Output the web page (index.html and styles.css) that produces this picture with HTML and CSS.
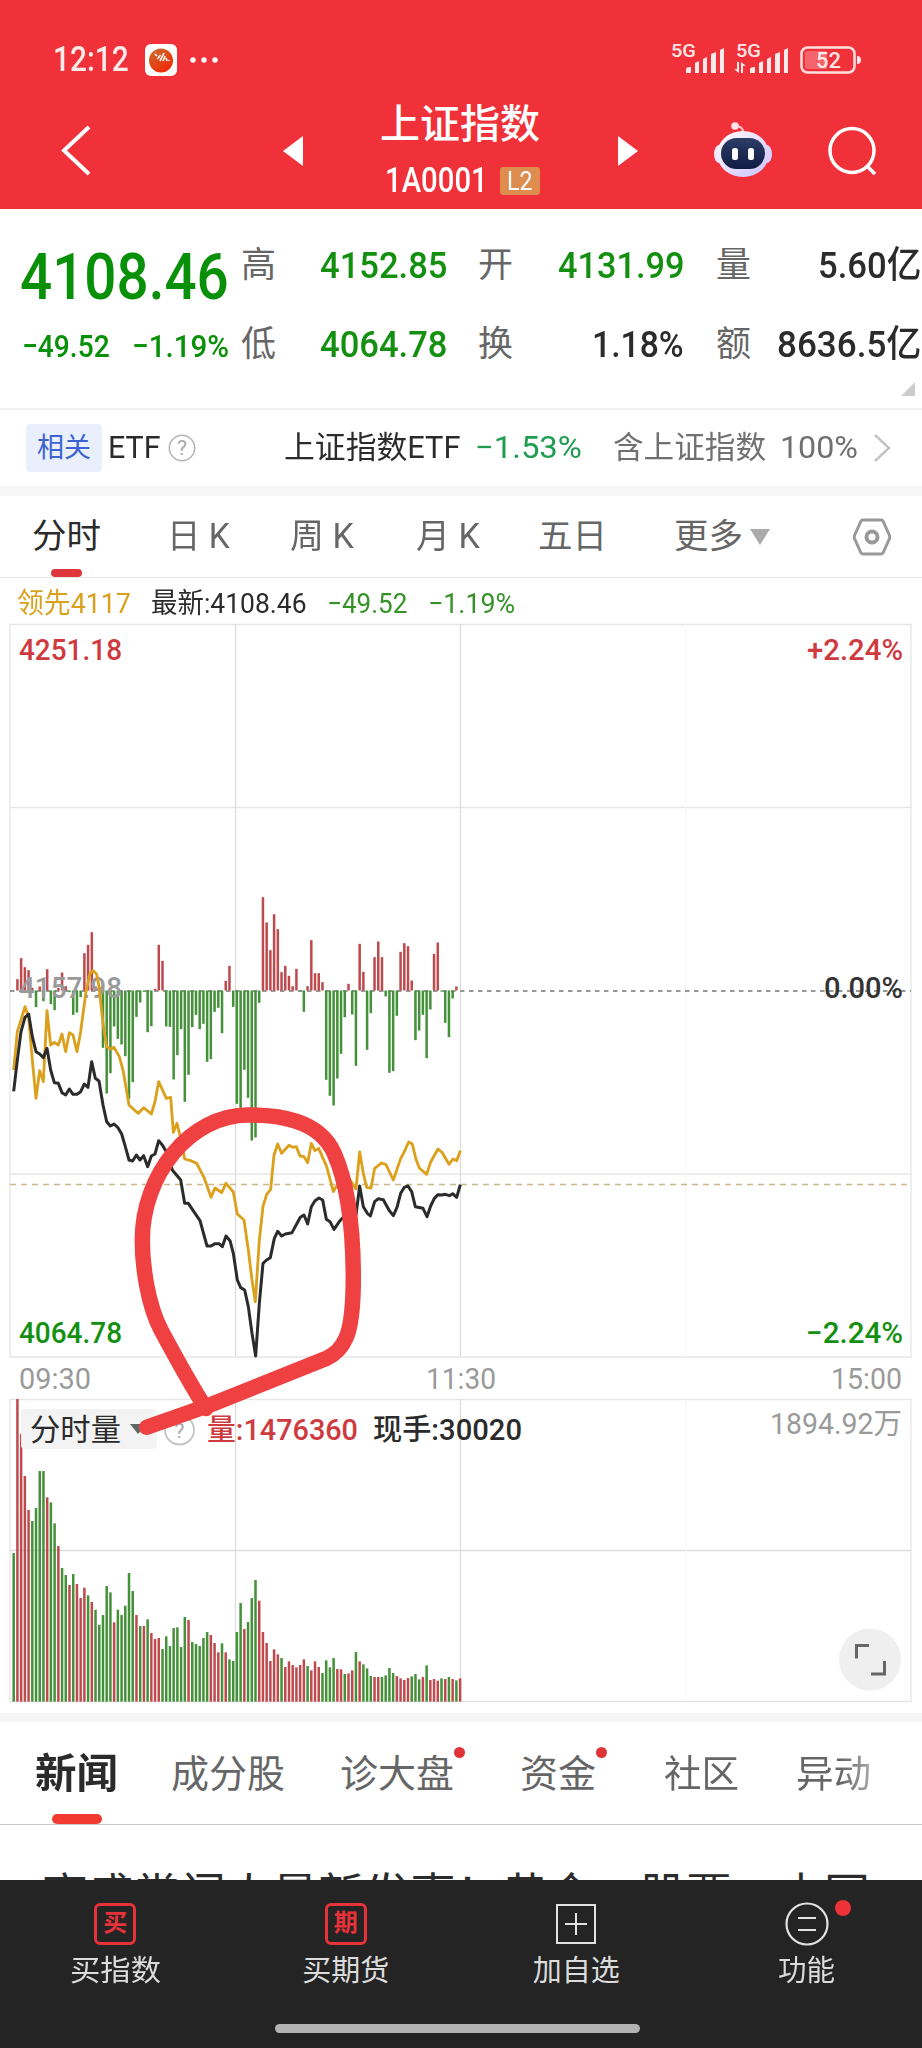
FILE: index.html
```html
<!DOCTYPE html>
<html lang="zh-CN">
<head>
<meta charset="utf-8">
<title>上证指数</title>
<link rel="stylesheet" href="styles.css">
</head>
<body>
<header class="top">
  <div class="status">
    <span class="clock" data-w="76">12:12</span>
    <svg class="app" viewBox="0 0 32 32" width="32" height="32">
      <defs><linearGradient id="ball" x1="0" y1="0" x2="0.6" y2="1"><stop offset="0" stop-color="#c8722c"/><stop offset="1" stop-color="#f02a08"/></linearGradient></defs>
      <rect width="32" height="32" rx="6" fill="#fff"/><circle cx="16" cy="16.500" r="12" fill="url(#ball)"/>
      <path d="M10 10l2 2M12.500 15l3-4M15 17l4-8M18 17l2-5M21 14l1 3M24 16v1" fill="none" stroke="#fff" stroke-width="1.600"/>
    </svg>
    <svg class="dots" viewBox="0 0 30 8" width="30" height="8" fill="#fff"><circle cx="4" cy="4" r="2.700"/><circle cx="15" cy="4" r="2.700"/><circle cx="26" cy="4" r="2.700"/></svg>
    <svg class="signals" viewBox="0 0 200 34" width="200" height="34" fill="#fff" fill-opacity=".9">
      <text x="2" y="15" class="net" textLength="25">5G</text>
      <path d="M17 31v-4q0-2 5-2v6zM26 31V21l4-2v12zM34 31V17l4-2v16zM42 31V12l5-2v21zM51 31V8l4-2v25z"/>
      <text x="67" y="15" class="net" textLength="25">5G</text>
      <path d="M70 20v11l-5-4h3v-7zM72 31V20l5 4h-3v7zM81 31v-4q0-2 5-2v6zM90 31V21l4-2v12zM98 31V17l4-2v16zM106 31V12l5-2v21zM115 31V8l4-2v25z"/>
      <rect x="132.500" y="5.500" width="53" height="25" rx="6" fill="none" stroke="#ffe0e0" stroke-width="2.500"/>
      <path d="M138 9h20v18h-20q-2 0-2-2V11q0-2 2-2z" fill-opacity=".25"/>
      <path d="M188 14q4 0 4 4t-4 4z"/>
      <text x="147" y="26" class="batt" textLength="25" lengthAdjust="spacingAndGlyphs">52</text>
    </svg>
  </div>
  <div class="titlebar">
    <svg viewBox="0 0 34 60" width="34" height="60"><path d="M29 6L4 29.500L29 53" fill="none" stroke="#fff" stroke-width="4"/></svg>
    <svg viewBox="0 0 24 32" width="24" height="32"><path d="M1 16L21 1V31z" fill="#fff"/></svg>
    <div class="name">
      <h1 data-w="160">上证指数</h1>
      <div class="code"><span data-w="103">1A0001</span><b class="l2"><span data-w="26">L2</span></b></div>
    </div>
    <svg viewBox="0 0 24 32" width="24" height="32"><path d="M21 16L1 1V31z" fill="#fff"/></svg>
    <svg viewBox="0 0 60 60" width="60" height="60">
      <defs>
        <linearGradient id="shell" x1="0" y1="0" x2="1" y2="1"><stop offset="0" stop-color="#fff"/><stop offset=".55" stop-color="#e6dcff"/><stop offset="1" stop-color="#c9c2fa"/></linearGradient>
        <linearGradient id="visor" x1="0" y1="0" x2="0" y2="1"><stop offset="0" stop-color="#2d3d66"/><stop offset="1" stop-color="#101c42"/></linearGradient>
      </defs>
      <path d="M22 5Q30 5 30 11" fill="none" stroke="#ffc9d6" stroke-width="2"/><circle cx="22" cy="5" r="3.800" fill="#ffe3ea"/>
      <ellipse cx="6" cy="33" rx="5" ry="9" fill="#f4e9ff"/><ellipse cx="54" cy="33" rx="5" ry="9" fill="#d9d3ff"/>
      <ellipse cx="30" cy="33" rx="26" ry="23" fill="url(#shell)"/>
      <rect x="8" y="17" width="44" height="31" rx="15.500" fill="url(#visor)"/>
      <rect x="19" y="27" width="6" height="12" rx="2.500" fill="#fff"/><rect x="35" y="27" width="6" height="12" rx="2.500" fill="#fff"/>
    </svg>
    <svg viewBox="0 0 54 54" width="54" height="54" fill="none" stroke="#fff" stroke-width="3.500"><circle cx="26" cy="26.500" r="22"/><path d="M41 42L49 50"/></svg>
  </div>
</header>

<section class="stats">
  <div class="now">
    <div class="price" data-w="209">4108.46</div>
    <div class="chg"><span data-w="88">−49.52</span><span data-w="97">−1.19%</span></div>
  </div>
  <div class="cells">
    <i>高</i><b class="down" data-w="127">4152.85</b><i>开</i><b class="down" data-w="126">4131.99</b><i>量</i><b data-w="103">5.60亿</b>
    <i>低</i><b class="down" data-w="127">4064.78</b><i>换</i><b data-w="92">1.18%</b><i>额</i><b data-w="144">8636.5亿</b>
  </div>
  <svg class="corner" viewBox="0 0 14 14" width="14" height="14"><path d="M14 0V14H0z" fill="#ccc"/></svg>
</section>

<section class="etf">
  <span class="tag">相关</span>
  <span data-w="53">ETF</span>
  <svg viewBox="0 0 30 30" width="30" height="30"><circle cx="16" cy="15" r="12.700" fill="none" stroke="#b5b5b5" stroke-width="1.500"/><text x="16" y="22" class="q">?</text></svg>
  <span class="fund" data-w="177">上证指数ETF</span>
  <span class="rate" data-w="107">−1.53%</span>
  <span class="muted" data-w="153">含上证指数</span>
  <span class="muted" data-w="78">100%</span>
  <svg viewBox="0 0 20 30" width="20" height="30"><path d="M3 2L17 15L3 28" fill="none" stroke="#c4c4c4" stroke-width="2.500"/></svg>
</section>

<nav class="periods">
  <span class="on">分时</span><span data-w="63">日 K</span><span data-w="64">周 K</span><span data-w="64">月 K</span><span>五日</span><span>更多</span>
  <svg viewBox="0 0 20 16" width="20" height="16"><path d="M0 0H20L10 16z" fill="#aaa"/></svg>
  <svg class="gear" viewBox="0 0 42 40" width="42" height="40" fill="none" stroke="#999" stroke-width="3"><path d="M12 3H30Q31 3 32 4L38.500 18.500Q39 20 38.500 21.500L32 36Q31 37 30 37H12Q11 37 10 36L3.500 21.500Q3 20 3.500 18.500L10 4Q11 3 12 3z"/><circle cx="21" cy="20" r="5.500" stroke-width="4"/></svg>
</nav>

<div class="legend">
  <span class="lead" data-w="114">领先4117</span><span data-w="156">最新:4108.46</span><span class="fall" data-w="80">−49.52</span><span class="fall" data-w="87">−1.19%</span>
</div>

<section class="charts">
  <svg class="chart" viewBox="0 616 922 1097" width="922" height="1097">
    <g fill="none" stroke="#e6e6e6" stroke-width="1.300">
      <path d="M10 624.500H911V1357H10zM10 807.500H911M10 1174H911"/>
      <path d="M10 1399.500H911V1701.500H10z"/>
      <path d="M10 1550.500H911M235.500 624V1357M235.500 1399V1701M460.500 624V1357M460.500 1399V1701" stroke="#dcdcdc"/>
      <path d="M685.500 624V1357M685.500 1399V1701" stroke="#f6f6f6"/>
    </g>
    <path d="M10 991H911" stroke="#777" stroke-width="1.500" stroke-dasharray="4.500 4.500"/>
    <path d="M10 1184.500H911" stroke="#c9b88a" stroke-width="1.300" stroke-dasharray="6 5"/>
    <g id="force"></g>
    <g class="num gray"><text x="19" y="998" textLength="103">4157.98</text></g>
    <g transform="translate(0 880) scale(.33333)" fill="none" stroke-linejoin="round">
      <polyline stroke="#dba01c" stroke-width="8.500" points="41,570 52,455 63,420 75,380 86,412 97,540 108,655 119,572 130,605 141,392 152,495 163,487 175,495 186,462 197,515 208,458 219,465 231,515 242,455 258,335 270,280 280,272 290,283 297,320 309,430 320,500 331,507 342,502 358,530 370,575 387,675 400,687 415,700 431,683 454,702 465,665 476,605 499,655 512,652 520,757 531,730 542,775 554,837 572,842 590,850 612,892 633,952 645,924 665,938 678,910 700,936 712,1002 732,1020 745,1110 756,1200 766,1265 778,1080 789,980 800,943 812,928 822,825 833,792 845,820 867,796 878,802 889,800 900,828 912,830 923,848 934,790 945,812 956,805 980,860 1000,935 1020,900 1045,892 1068,927 1079,816 1090,880 1100,922 1113,924 1124,865 1145,849 1158,854 1180,900 1202,836 1213,815 1226,786 1237,792 1248,838 1258,864 1280,883 1292,846 1314,807 1326,817 1347,853 1359,837 1370,842 1381,812"/>
      <polyline stroke="#2b2b2b" stroke-width="9" points="41,634 52,540 63,455 75,412 86,402 97,470 108,515 119,522 130,533 141,505 152,570 163,608 175,610 186,638 197,645 208,627 219,643 231,643 242,635 253,612 264,622 275,545 286,595 297,603 309,675 320,725 331,738 342,732 353,742 365,762 376,800 387,840 398,843 409,825 420,840 431,827 443,860 454,828 465,822 476,782 487,795 499,815 517,870 542,900 554,970 565,970 577,988 600,1022 621,1098 633,1098 645,1091 657,1091 667,1100 678,1068 690,1082 700,1120 712,1200 722,1223 734,1230 745,1280 756,1360 767,1428 778,1270 789,1150 800,1140 811,1133 823,1075 833,1054 845,1068 856,1062 876,1058 890,1032 901,1012 912,1005 923,1032 934,980 945,962 957,954 968,960 979,1018 990,1025 1002,1048 1020,1022 1045,995 1068,1005 1079,918 1090,980 1102,1000 1111,1008 1124,965 1135,956 1150,959 1168,992 1180,1007 1191,982 1202,940 1213,922 1224,918 1235,935 1246,980 1269,985 1281,1010 1292,978 1303,955 1314,944 1325,945 1336,943 1348,947 1358,941 1370,952 1381,914"/>
    </g>
    <g class="num">
      <text x="19" y="659.500" textLength="103" class="up">4251.18</text>
      <text x="807" y="659.500" textLength="96" class="up">+2.24%</text>
      <text x="824" y="998" textLength="79" fill="#333">0.00%</text>
      <text x="19" y="1343" textLength="103" class="dn">4064.78</text>
      <text x="806" y="1343" textLength="97" class="dn">−2.24%</text>
    </g>
    <g class="num gray thin">
      <text x="19" y="1389" textLength="72">09:30</text><text x="426" y="1389" textLength="70">11:30</text><text x="831" y="1389" textLength="71">15:00</text>
    </g>
    <g id="volume"></g>
    <rect x="21" y="1409" width="136" height="40" rx="4" fill="#f3f3f3" fill-opacity=".96"/>
    <text x="30" y="1440" class="kind" textLength="91">分时量</text>
    <path d="M130 1424H147L138 1434z" fill="#5d6866"/>
    <circle cx="179.500" cy="1430" r="14.500" fill="none" stroke="#c4c4c4" stroke-width="1.800"/><text x="179.500" y="1438" class="q">?</text>
    <g class="num">
      <text x="207" y="1439.500" textLength="151" class="up">量:1476360</text>
      <text x="373" y="1439.500" textLength="149" fill="#2b2b2b">现手:30020</text>
    </g>
    <g class="num gray thin"><text x="770" y="1434" textLength="132">1894.92万</text></g>
    <circle cx="870" cy="1659.500" r="31" fill="#efefef"/>
    <path d="M856.500 1658.500V1645.500H869M871 1674H884.500V1661" fill="none" stroke="#666" stroke-width="3"/>
    <path d="M146.700 1427.300L210 1405L326.700 1358.300Q340 1352 346 1338Q353.300 1322 353.300 1276.700Q353 1195 334 1153C319 1120 280 1115 248 1115C190 1115 142.300 1175 142.300 1240C142.300 1267 148 1305 161 1330Q190 1384 206 1408.500" fill="none" stroke="#f04142" stroke-width="15.500" stroke-linecap="round" stroke-linejoin="round"/>
  </svg>
</section>

<nav class="news">
  <span class="on" data-w="83">新闻</span><span data-w="114">成分股</span><span class="dot" data-w="114">诊大盘</span><span class="dot" data-w="76">资金</span><span data-w="75">社区</span><span class="fade" data-w="75">异动</span>
</nav>
<div class="headline"><span data-w="828">高盛掌门人最新发声！黄金、股票、中国</span></div>

<footer class="bar">
  <div class="acts">
    <a><b class="seal">买</b><span data-w="91">买指数</span></a>
    <a><b class="seal">期</b><span data-w="87">买期货</span></a>
    <a><svg viewBox="0 0 44 44" width="44" height="44" fill="none" stroke="#e2e2e2" stroke-width="2"><path d="M3 3H41V41H3zM11 22H33M22 11V33"/></svg><span data-w="87">加自选</span></a>
    <a><svg viewBox="0 0 44 44" width="44" height="44" fill="none" stroke="#e2e2e2" stroke-width="2.200"><circle cx="22" cy="22" r="20.500"/><path d="M13 16H31M13 28H31"/></svg><em></em><span data-w="57">功能</span></a>
  </div>
  <div class="home"></div>
</footer>
<script src="app.js"></script>
</body>
</html>
```
FILE: styles.css
```css
* { box-sizing: border-box; }
body { margin: 0; width: 922px; height: 2048px; overflow: hidden; background: #fff; color: #2b2b2b; font-family: Roboto, "Noto Sans CJK SC", sans-serif; display: flex; flex-direction: column; }
svg { display: block; flex: none; }
i, em { font-style: normal; }
b, h1 { font-weight: inherit; margin: 0; }
[data-w] { white-space: nowrap; }
[data-w] > u { display: inline-block; text-decoration: none; transform-origin: 0 50%; }

.top { height: 209px; background: #f13139; color: #fff; flex: none; }
.status { height: 92px; padding: 28px 0 0 53px; display: flex; align-items: center; }
.clock { font-size: 35px; line-height: 40px; font-weight: 500; color: #ffeaea; }
.app { margin-left: 16px; }
.dots { margin-left: 12px; }
.signals { margin-left: 450px; margin-top: -3px; }
.net { font: 500 18px Roboto, sans-serif; }
.batt { font: 500 22px Roboto, sans-serif; }
.titlebar { height: 117px; display: grid; grid-template-columns: 222px 94px 241px 96px 113px 1fr; padding-left: 60px; align-items: center; }
.name { align-self: start; padding: 11px 0 0 4px; }
.name h1 { font-size: 40px; line-height: 44px; font-weight: 500; }
.code { display: flex; align-items: center; margin-top: 17px; padding-left: 5px; font-size: 35px; line-height: 34px; font-weight: 500; }
.l2 { margin-left: 12px; width: 40px; height: 28px; border-radius: 3px; background: #df8d4e; font-size: 25px; line-height: 29px; padding-left: 7px; font-weight: 400; }

.stats { height: 201px; flex: none; border-bottom: 2px solid #efefef; display: flex; position: relative; }
.now { width: 241px; padding: 38px 0 0 20px; color: #089008; }
.price { font-size: 65px; line-height: 60px; font-weight: 500; }
.chg { display: flex; gap: 22px; margin-top: 22px; padding-left: 2px; font-size: 32px; line-height: 34px; font-weight: 500; }
.cells { display: grid; grid-template-columns: 35px 171px 66px 171px 67px 170px; grid-auto-rows: 79px; padding-top: 17px; align-items: center; line-height: 40px; }
.cells i { font-size: 35px; color: #666; justify-self: end; }
.cells i:first-child, .cells i:nth-child(7) { justify-self: start; }
.cells b { font-size: 37px; font-weight: 500; justify-self: end; }
.cells .down { color: #139010; }
.corner { position: absolute; right: 7px; bottom: 12px; }

.etf { height: 76px; flex: none; display: grid; grid-template-columns: 82px 58px 118px 191px 138px 167px 92px 1fr; padding-left: 26px; align-items: center; font-size: 31px; line-height: 48px; }
.tag { width: 76px; height: 48px; border-radius: 4px; background: #e9effc; color: #3d63d2; font-size: 27px; text-align: center; line-height: 49px; }
.q { font: 400 21px Roboto, sans-serif; fill: #a8a8a8; text-anchor: middle; }
.rate { color: #1f9c50; }
.muted { color: #707070; }

.periods { height: 92px; flex: none; border-top: 10px solid #f6f6f6; border-bottom: 1px solid #e8e8e8; display: grid; grid-template-columns: 135px 123px 126px 122px 136px 76px 101px 1fr; padding-left: 32px; align-items: center; font-size: 34.5px; line-height: 81px; color: #666; }
.periods span { height: 81px; }
.periods .on { color: #2b2b2b; position: relative; }
.periods .on::after { content: ""; position: absolute; left: 19px; bottom: 0; width: 31px; height: 8px; border-radius: 4px; background: #de363b; }

.legend { height: 38px; flex: none; display: grid; grid-template-columns: 134px 176px 101px 1fr; padding: 7px 0 0 17px; font-size: 28px; line-height: 38px; }
.lead { color: #d9a01d; }
.fall { color: #359226; }

.charts { height: 1097px; flex: none; }
.num { font: 500 29px/1 Roboto, "Noto Sans CJK SC", sans-serif; }
.thin { font-weight: 400; }
.gray { fill: #9a9a9a; }
.up { fill: #cf3a40; }
.dn { fill: #139010; }
.kind { font: 400 30px "Noto Sans CJK SC", sans-serif; fill: #2b2b2b; }
.bar-up { fill: #bf4a4d; }
.bar-down { fill: #44913a; }

.news { height: 112px; flex: none; border-top: 9px solid #f6f6f6; border-bottom: 1px solid #c8c8c8; display: grid; grid-template-columns: 136px 169px 180px 144px 132px 1fr; padding-left: 35px; font-size: 38px; line-height: 104px; color: #666; }
.news span { position: relative; height: 102px; }
.news .on { font-size: 41px; font-weight: 700; color: #2b2b2b; }
.news .on::after { content: ""; position: absolute; left: 17px; bottom: 0; width: 50px; height: 10px; border-radius: 5px; background: #f23a31; }
.news .dot::after { content: ""; position: absolute; right: -11px; top: 25px; width: 11px; height: 11px; border-radius: 50%; background: #de3438; }
.news .fade u { background: linear-gradient(90deg, #666 60%, #aaa); -webkit-background-clip: text; color: transparent; }
.headline { height: 55px; flex: none; overflow: hidden; padding: 40px 0 0 42px; font-size: 46px; line-height: 60px; }

.bar { height: 168px; flex: none; background: #242424; color: #dcdcdc; }
.acts { display: grid; grid-template-columns: repeat(4, 230.5px); }
.acts a { display: flex; flex-direction: column; align-items: center; padding-top: 22px; position: relative; font-size: 29px; line-height: 34px; }
.acts span { margin-top: 8px; }
.seal { width: 42px; height: 42px; margin: 1px 0; border: 3px solid #e63238; border-radius: 6px; color: #e63238; font-size: 24px; font-weight: 700; line-height: 35px; text-align: center; }
.acts em { position: absolute; left: 143px; top: 20px; width: 16px; height: 16px; border-radius: 50%; background: #ee3338; }
.home { width: 365px; height: 9px; border-radius: 5px; background: #b3b3b3; margin: 36px 0 0 275px; }
```
FILE: app.js
```js
// Per-minute volume: bar height (in thirds of a pixel) and direction.
const volume = "446g 908r 803r 677r 575r 542g 581g 692g 692g 613r 598g 535g 467r 401g 380g 350r 383g 353r 311r 342r 319g 299r 276g 231g 260g 347g 328g 238r 276g 260g 288g 386g 332g 260r 227g 227r 247g 206r 188r 191r 158g 196g 167g 221g 223g 164g 254g 245r 179g 173g 167g 191g 209g 200r 176r 148r 175g 148r 127g 122g 209g 296g 218r 239g 311g 365g 303r 209r 176r 122r 157r 142r 131g 104r 121r 110r 103r 110r 127r 107g 94r 121r 104r 86g 124g 103g 131g 98r 97r 83g 85r 94r 149g 121r 112g 100g 77g 74r 74r 74g 79g 101g 86g 77r 70r 65r 71r 76g 83g 67g 74r 109g 65r 68r 63r 70g 68r 74g 68r 64g 70r".split(" ");
// Per-minute buying (+) and selling (-) force.
const force = [0,34,97,70,61,8,-50,12,-32,64,-41,-59,8,54,13,-5,-73,-66,-20,112,137,175,12,5,-172,-309,-248,-108,-145,-162,-197,-325,-275,-79,-36,-4,-125,-107,5,137,89,-108,-109,-267,-194,-116,-334,-253,-110,-73,-116,-100,-214,-206,-64,-52,-128,29,74,-49,-340,-352,-238,-322,-450,-441,-37,280,204,121,229,184,55,74,44,13,65,-2,-64,13,151,52,52,25,-268,-316,-345,-264,-190,-80,20,-72,-226,140,56,-178,-68,100,147,100,-18,-247,-242,-76,116,142,133,30,-149,-120,-73,-203,-57,110,144,-3,-97,-140,-24,12,0];
const x0 = 13.7, step = 3.72;

function bar(group, i, y, h, up) {
  const r = document.createElementNS("http://www.w3.org/2000/svg", "rect");
  r.setAttribute("x", (x0 + i * step - 1.25).toFixed(2));
  r.setAttribute("y", y);
  r.setAttribute("width", 2.5);
  r.setAttribute("height", h);
  r.setAttribute("class", up ? "bar-up" : "bar-down");
  group.appendChild(r);
}
const vg = document.getElementById("volume");
volume.forEach((v, i) => { const h = parseInt(v, 10) / 3; bar(vg, i, 1701.7 - h, h, v.endsWith("r")); });
const fg = document.getElementById("force");
force.forEach((v, i) => { const h = Math.abs(v) / 3; bar(fg, i, v > 0 ? 990.5 - h : 990.5, h, v > 0); });

// Condense each label to the width of its slot.
document.querySelectorAll("[data-w]").forEach(el => {
  const u = document.createElement("u");
  while (el.firstChild) u.appendChild(el.firstChild);
  el.appendChild(u);
  const w = Number(el.dataset.w), n = u.offsetWidth;
  u.style.transform = `scaleX(${w / n})`;
  u.style.marginRight = `${w - n}px`;
  el.style.width = `${w}px`;
});
document.querySelectorAll("svg text[textLength]").forEach(t => t.setAttribute("lengthAdjust", "spacingAndGlyphs"));
```
